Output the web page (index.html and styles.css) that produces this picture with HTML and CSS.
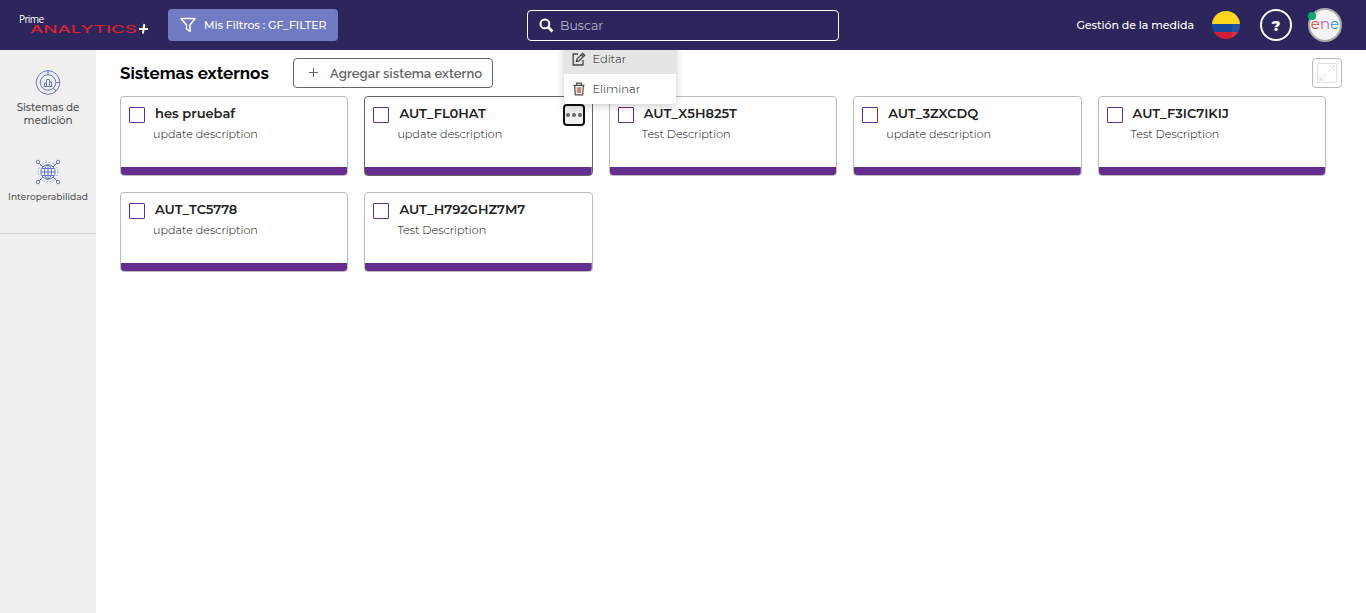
FILE: index.html
```html
<!DOCTYPE html>
<html lang="es">
<head>
<meta charset="utf-8">
<title>Sistemas externos</title>
<link rel="stylesheet" href="styles.css">
</head>
<body>
<header class="topbar">
  <div class="topbar-left">
    <svg class="logo" width="132" height="24" viewBox="0 0 132 24">
      <text class="logo-prime" x="1" y="10" textLength="25">Prime</text>
      <text class="logo-name" x="12" y="20" textLength="107" lengthAdjust="spacingAndGlyphs">ANALYTICS</text>
      <path d="M121 16h9M126.300 11l-1.400 9.500" stroke="#fff" stroke-width="2" fill="none"/>
    </svg>
    <button class="filter-btn">
      <svg width="16" height="16" viewBox="0 0 16 16" fill="none" stroke="#fff" stroke-width="1.500" stroke-linejoin="round"><path d="M1 1.500h14L10 8v6.500L6.500 12V8z"/></svg>
      <span>Mis Filtros : GF_FILTER</span>
    </button>
  </div>
  <div class="search">
    <svg width="15" height="15" viewBox="0 0 15 15" fill="none" stroke="#fff"><circle cx="5.900" cy="5.900" r="4.400" stroke-width="2"/><path d="M9.300 9.300l4.200 4.200" stroke-width="2.800"/></svg>
    <span>Buscar</span>
  </div>
  <div class="topbar-right">
    <span class="module">Gestión de la medida</span>
    <span class="flag"></span>
    <span class="help">?</span>
    <span class="avatar"><span class="brand"><span class="b1">e</span><span class="b2">n</span><span class="b3">e</span></span><span class="status"></span></span>
  </div>
</header>
<div class="layout">
  <nav class="sidebar">
    <a class="nav-item">
      <svg width="26" height="26" viewBox="0 0 26 26" fill="none" stroke="#6877c5"><circle cx="13" cy="12.500" r="11.800"/><circle cx="13" cy="12.500" r="7.800"/><path d="M13 1v4M21 12.500h4M18.500 18l2.500 3M8.500 16.500h9M9.500 16v-3h2v3M11.500 16V9.500h3V16M14.500 16v-4h2v4"/></svg>
      <span>Sistemas de<br>medición</span>
    </a>
    <a class="nav-item small">
      <svg width="26" height="26" viewBox="0 0 26 26" fill="none" stroke="#6877c5"><circle cx="13" cy="13" r="7.200"/><ellipse cx="13" cy="13" rx="3.500" ry="7.200"/><path d="M13 6v14M6 13h14M7 9.500h12M7 16.500h12M4 4l4 4M22 4l-4 4M4 22l4-4M22 22l-4-4"/><circle cx="2.900" cy="2.900" r="1.700"/><circle cx="23.100" cy="2.900" r="1.700"/><circle cx="2.900" cy="23.100" r="1.700"/><circle cx="23.100" cy="23.100" r="1.700"/><circle cx="13" cy="13" r="9.800" stroke-width=".9" stroke-dasharray="1 2.100"/></svg>
      <span>Interoperabilidad</span>
    </a>
  </nav>
  <main class="content">
    <div class="heading">
      <h1>Sistemas externos</h1>
      <button class="add-btn"><svg width="10" height="10" viewBox="0 0 10 10" stroke="#666" fill="none"><path d="M0 4.500h9M4.500 0v9"/></svg><span>Agregar sistema externo</span></button>
      <button class="expand-btn"><svg width="20" height="20" viewBox="0 0 20 20" fill="none" stroke="#e0e0e0"><path d="M.5.5h19v19H.5zM3 17L9 11M11 9l6-6M11.500 3H17v5.500M3 11.500V17h5.500"/></svg></button>
    </div>
    <div class="grid">
      <article class="card"><span class="check"></span><div><h2>hes pruebaf</h2><p>update description</p></div></article>
      <article class="card active"><span class="check"></span><div><h2>AUT_FL0HAT</h2><p>update description</p></div>
        <button class="more"><i></i><i></i><i></i></button>
        <div class="menu">
          <div class="menu-row hover"><svg width="14" height="14" viewBox="0 0 14 14" fill="none" stroke="#444" stroke-width="1.300"><path d="M6 2H1.200v11H11V8M4.500 9.500l.6-2.600L10.700 1.300l2 2L7.100 8.900zM9.300 2.700l2 2"/></svg><span>Editar</span></div>
          <div class="menu-row"><svg width="14" height="14" viewBox="0 0 14 14" fill="none" stroke="#514648" stroke-width="1.200"><path d="M1.500 3.300h11M4.700 3V1.200h4.600V3M2.700 3.500l.6 9.400h7.400l.6-9.400"/><path d="M5.300 5.300v5.800M8.700 5.300v5.800" stroke="#e0862a"/><path d="M7 5.300v5.800" stroke="#70329b"/></svg><span>Eliminar</span></div>
        </div>
      </article>
      <article class="card"><span class="check"></span><div><h2>AUT_X5H825T</h2><p>Test Description</p></div></article>
      <article class="card"><span class="check"></span><div><h2>AUT_3ZXCDQ</h2><p>update description</p></div></article>
      <article class="card"><span class="check"></span><div><h2>AUT_F3IC7IKIJ</h2><p>Test Description</p></div></article>
      <article class="card"><span class="check"></span><div><h2>AUT_TC5778</h2><p>update description</p></div></article>
      <article class="card"><span class="check"></span><div><h2>AUT_H792GHZ7M7</h2><p>Test Description</p></div></article>
    </div>
  </main>
</div>
</body>
</html>
```
FILE: styles.css
```css
* { box-sizing: border-box; }
body { margin: 0; height: 613px; overflow: hidden; background: #fff; font-family: Montserrat, Inter, sans-serif; color: #222; display: flex; flex-direction: column; }
button { font: inherit; margin: 0; padding: 0; background: none; }
h1, h2, p { margin: 0; white-space: nowrap; }
svg { display: block; flex: none; }
.topbar { height: 50px; flex: none; background: #2c265d; display: grid; grid-template-columns: 527px 312px 1fr; align-items: center; position: relative; z-index: 5; color: #fff; }
.topbar-left { display: flex; align-items: center; padding-left: 18px; gap: 18px; }
.logo { overflow: visible; }
.logo-prime { font: 10px "Open Sans", sans-serif; fill: #fff; }
.logo-name { font: 500 10.500px Inter, sans-serif; fill: #d8232f; }
.filter-btn { width: 170px; height: 32px; border: 0; border-radius: 4px; background: #707bc4; color: #fff; display: flex; align-items: center; padding-left: 12px; gap: 8px; font-size: 11px; font-weight: 500; letter-spacing: -.07px; white-space: nowrap; }
.search { height: 31px; border: 1px solid #fff; border-radius: 4px; display: flex; align-items: center; padding-left: 11px; gap: 6px; color: #b8b6c7; font-size: 12.500px; font-weight: 400; margin-top: 1px; }
.search span { margin-top: -1px; }
.topbar-right { display: flex; align-items: center; justify-content: flex-end; padding-right: 24px; }
.module { font-size: 11px; font-weight: 500; letter-spacing: -.05px; margin-right: 18px; white-space: nowrap; }
.flag { width: 28px; height: 28px; border-radius: 50%; background: linear-gradient(90deg, transparent 70%, #ffffff10 70%), linear-gradient(#fdd51c 46%, #17479a 46% 74%, #d02038 74%); margin-right: 20px; }
.help { width: 32px; height: 32px; border: 2px solid #fff; border-radius: 50%; display: flex; align-items: center; justify-content: center; font-size: 15px; font-weight: 800; margin-right: 16px; }
.avatar { width: 34px; height: 34px; border-radius: 50%; border: 2px solid #aaa; background: #f5f5f5; position: relative; display: flex; align-items: center; justify-content: center; }
.brand { font-size: 15px; line-height: 20px; font-weight: 400; letter-spacing: 0; margin-top: -3px; }
.b1 { color: #e3472f; } .b2 { color: #d6559b; } .b3 { color: #159bd7; }
.status { position: absolute; left: -2px; top: 2px; width: 8px; height: 8px; border-radius: 50%; background: #00ae6b; }
.layout { flex: 1; display: flex; }
.sidebar { width: 96px; flex: none; background: #f0f0f0; color: #555; }
.sidebar::after { content: ""; display: block; height: 1px; background: #d3d3d3; margin-top: 30px; }
.nav-item { display: flex; flex-direction: column; align-items: center; padding-top: 20px; gap: 5px; text-align: center; font-size: 10.400px; line-height: 13px; font-weight: 500; letter-spacing: -.1px; }
.nav-item.small { padding-top: 32px; font-size: 9.100px; letter-spacing: 0; }
.content { flex: 1; padding: 8px 24px 0; }
.heading { display: flex; align-items: center; height: 30px; }
h1 { width: 173px; font-family: Raleway, Montserrat, sans-serif; font-size: 17px; font-weight: 700; color: #000; }
.add-btn { width: 200px; height: 30px; border: 1px solid #666; border-radius: 4px; display: flex; align-items: center; padding-left: 15px; gap: 11px; font-family: Raleway, Montserrat, sans-serif; font-size: 13px; font-weight: 600; letter-spacing: .07px; color: #666; white-space: nowrap; }
.expand-btn { width: 30px; height: 30px; border: 1px solid #bbb; border-radius: 4px; margin-left: auto; display: flex; align-items: center; justify-content: center; }
.grid { display: grid; width: 1206px; grid-template-columns: repeat(5, 1fr); gap: 16px; margin-top: 8px; }
.card { height: 80px; position: relative; border: 1px solid #bcbcbc; border-radius: 4px; background: linear-gradient(#662d91, #662d91) bottom / 100% 8px no-repeat; padding: 8px; display: flex; gap: 8px; }
.card.active { border-color: #666; }
.check { width: 16px; height: 16px; flex: none; border: 1px solid #662d91; border-radius: 1px; margin-top: 2px; }
h2 { font-size: 13px; line-height: 17px; font-weight: 600; padding-left: 2px; color: #222; }
p { font-size: 11.150px; line-height: 16px; margin-top: 4px; font-weight: 300; color: #000; }
.more { position: absolute; right: 7px; top: 7px; width: 22px; height: 22px; border: 2px solid #101010; border-radius: 4px; background: #efefef; display: flex; gap: 2px; align-items: center; justify-content: center; }
.more i { width: 4px; height: 4px; flex: none; border-radius: 50%; background: #666; }
.menu { position: absolute; z-index: 2; left: 199px; top: -53px; width: 112px; height: 60px; background: #fff; border-radius: 4px; box-shadow: 0 2px 8px #0003; font-size: 11.500px; font-weight: 300; color: #111; }
.menu-row { height: 30px; display: flex; align-items: center; padding-left: 8px; gap: 6px; }
.menu-row span { margin-top: -1px; }
.menu-row.hover { background: #e5e5e5; width: 113px; }
```
